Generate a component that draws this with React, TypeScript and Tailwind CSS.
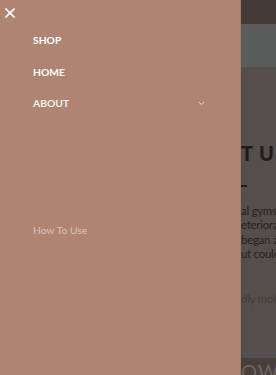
import { ChevronDown } from 'lucide-react';

const lines = ['al gyms are', 'eteriorating', 'began all', 'ut could be'];

export default function App() {
  return (
    <div className="relative w-[276px] h-[375px] overflow-hidden bg-[#544f4c] font-['Lato','Open_Sans',sans-serif]">
      {/* Page behind the drawer (already dimmed) */}
      <div className="flex flex-col h-full">
        <div className="h-[24px] bg-[#463a38]" />
        <div className="h-[43px] bg-[#5a5b5b]" />
        <div className="flex-1 flex flex-col pl-[241px] whitespace-nowrap">
          <div className="mt-[76px] text-[20px] leading-[20px] font-black tracking-[6px] text-[#1e1c1c]">TUS</div>
          <div className="mt-[22px] w-[6px] h-[2px] bg-[#1e1c1c]" />
          <div className="mt-[17px] text-[11.5px] leading-[14.3px] tracking-[-0.3px] text-[#252221]">
            {lines.map((l) => (
              <div key={l}>{l}</div>
            ))}
          </div>
          <div className="mt-[31px] text-[11.5px] leading-[14px] tracking-[-0.3px] text-[#433e3b]">dly mobile</div>
          <div className="mt-auto h-[17px] bg-[#4a3e3b] pt-[1px] text-[20px] leading-[24px] tracking-[1px] text-[#6e6460]">OW</div>
        </div>
      </div>

      {/* Drawer */}
      <aside className="absolute left-0 top-0 w-[241px] h-full bg-[#b08473] border-r border-[#a67a6a]">
        <button className="absolute left-[5px] top-[8px] w-[10px] h-[10px]">
          <svg viewBox="0 0 10 10" className="w-[10px] h-[10px]" stroke="white" strokeWidth="1.6">
            <path d="M0.5 0.5 L9.5 9.5 M9.5 0.5 L0.5 9.5" />
          </svg>
        </button>

        <nav className="flex flex-col pt-[33px] pl-[33px] pr-[34px] text-[10.3px] leading-[10px] font-bold text-white">
          <a className="h-[32px] pt-[2px]">SHOP</a>
          <a className="h-[32px] pt-[2px]">HOME</a>
          <div className="flex items-center justify-between h-[12px] text-[#f8eeea]">
            <span>ABOUT</span>
            <ChevronDown className="w-[9px] h-[9px] text-[#ead6cf]" strokeWidth={2.5} />
          </div>
        </nav>

        <div className="mt-[114px] pl-[33px] text-[10.3px] text-[#dcc2b8]">How To Use</div>
      </aside>
    </div>
  );
}
